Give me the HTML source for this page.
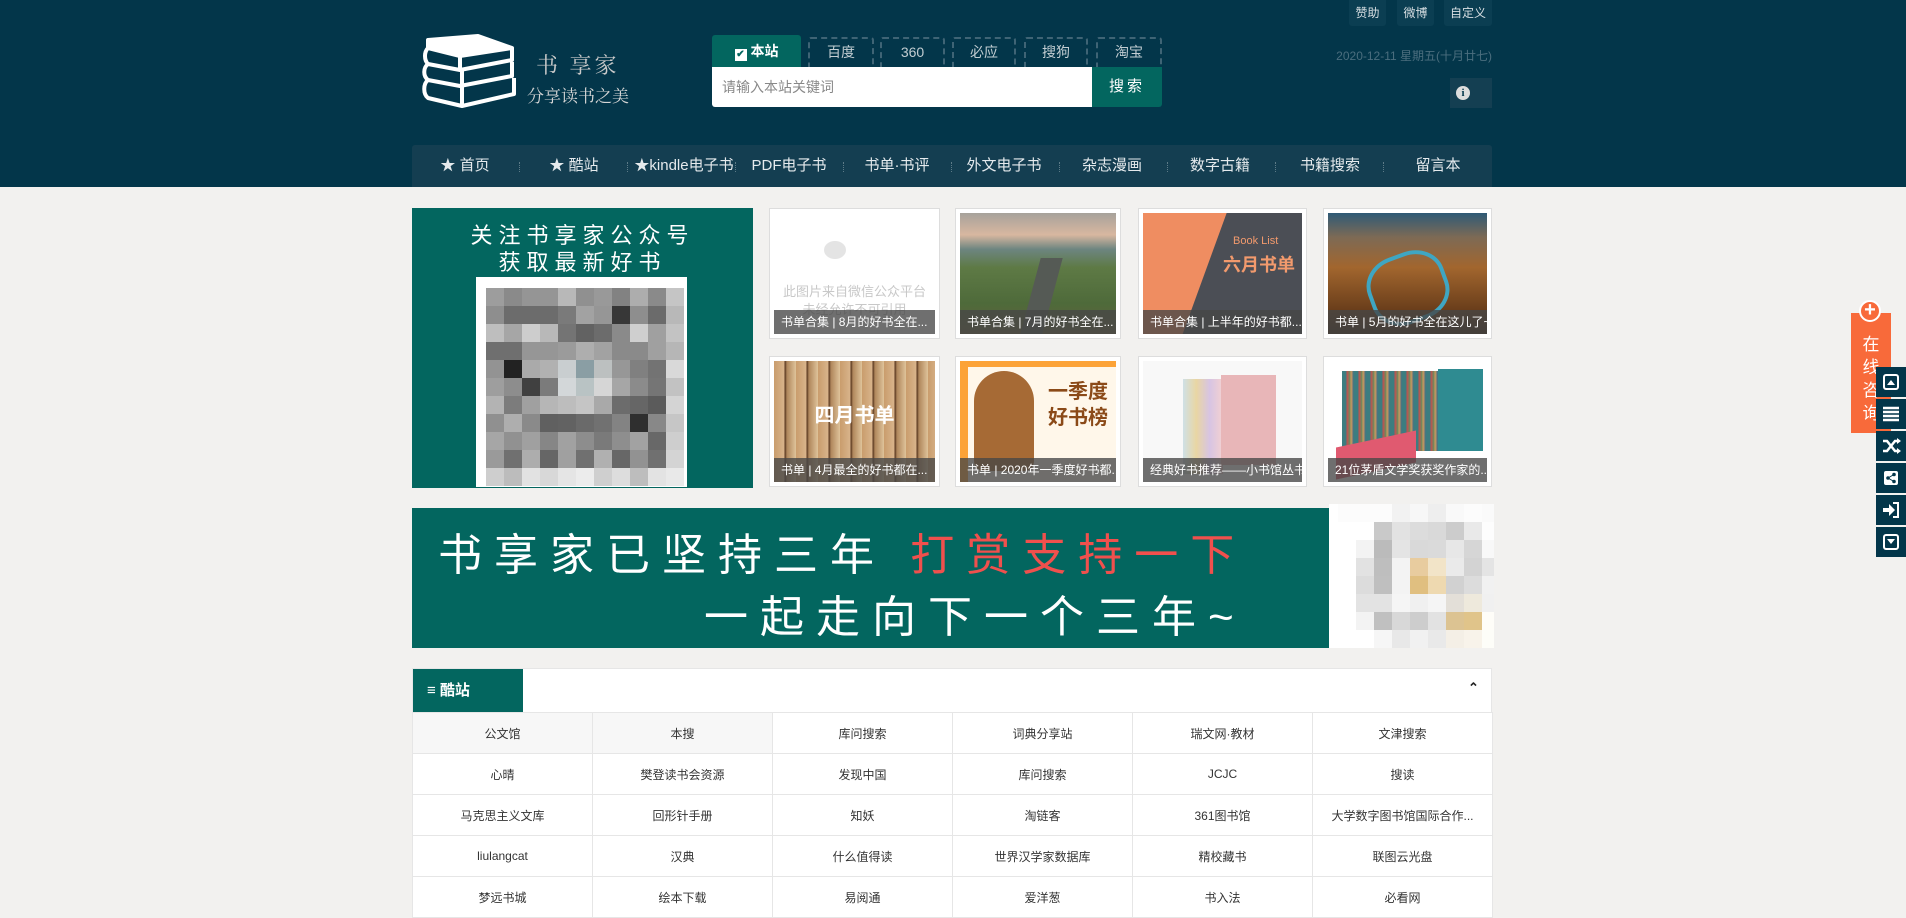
<!DOCTYPE html>
<html><head><meta charset="utf-8"><style>
*{margin:0;padding:0;box-sizing:border-box}
body{width:1906px;height:909px;overflow:hidden;background:#f2f1ef;font-family:"Liberation Sans","Noto Sans CJK SC",sans-serif;position:relative;font-size:12px;color:#333}
.abs{position:absolute}
#hd{left:0;top:0;width:1906px;height:187px;background:#03364a}
.tb{top:0;height:26px;background:#0b3e52;color:#d8dfe3;font-size:12px;line-height:26px;text-align:center;border-radius:0 0 3px 3px}
.tab{top:37px;height:30px;border:2px dashed #3f6475;border-bottom:none;color:#c2cdd2;font-size:14px;text-align:center;line-height:27px;border-radius:3px 3px 0 0}
.nav{top:145px;left:412px;width:1080px;height:42px;background:#143e51;border-radius:3px 3px 0 0}
.nav span{position:absolute;top:0;line-height:42px;color:#e5eaed;font-size:15px;transform:translateX(-50%);white-space:nowrap}
.nav i{position:absolute;top:17px;height:10px;border-left:1px dotted #5d7b88}
.card{background:#fff;border:1px solid #ddd}
.card .im{position:absolute;left:4px;top:4px;right:4px;bottom:4px;overflow:hidden}
.card .cap{position:absolute;left:0;right:0;bottom:0;height:24px;background:rgba(70,70,70,.78);color:#fff;font-size:12px;line-height:24px;padding-left:7px;white-space:nowrap;overflow:hidden}
.qr{display:grid;grid-template-columns:repeat(11,18px);grid-auto-rows:18px}
.mz{display:grid;grid-template-columns:repeat(9,18px);grid-auto-rows:18px}
table{border-collapse:collapse}
td{width:180px;height:41px;border:1px solid #e6e6e6;text-align:center;font-size:12px;color:#333;background:#fff}
.fi{left:1876px;width:30px;height:30px;background:#03364a}
</style></head><body>
<div id="hd" class="abs"></div>
<div class="abs tb" style="left:1349px;width:37px">赞助</div>
<div class="abs tb" style="left:1397px;width:37px">微博</div>
<div class="abs tb" style="left:1444px;width:48px">自定义</div>

<svg class="abs" style="left:420px;top:34px" width="96" height="76" viewBox="0 0 96 76">
<g fill="none" stroke="#fff" stroke-width="4" stroke-linejoin="round">
<path d="M8 6 L58 2 L92 14 L40 22 L8 14 Z"/><path d="M8 14 C4 18 4 26 8 30 L40 36 L92 26 L92 14"/><path d="M40 22 L40 36"/>
<path d="M8 30 C3 34 3 42 8 46 L40 52 L92 42 L92 28"/><path d="M42 36 L42 52"/>
<path d="M8 46 C3 50 3 60 8 64 L42 72 L94 60 L94 44"/><path d="M42 52 L42 72"/>
</g><path d="M8 6 L58 2 L92 14 L40 22 L8 14 Z" fill="#fff"/></svg>
<div class="abs" style="left:536px;top:49px;color:#c9c9c9;font-size:22px;font-family:'Liberation Serif','Noto Serif CJK SC',serif;letter-spacing:3px">书 享家</div>
<div class="abs" style="left:527px;top:82px;color:#d6d6d6;font-size:17px;font-family:'Liberation Serif','Noto Serif CJK SC',serif">分享读书之美</div>

<div class="abs" style="left:712px;top:35px;width:89px;height:32px;background:#03665f;border-radius:3px 3px 0 0;color:#fff;font-weight:bold;font-size:14px;line-height:32px;text-align:center"><span style="display:inline-block;width:12px;height:12px;background:#fff;color:#03665f;font-size:10px;line-height:12px;vertical-align:-1px;margin-right:4px">✔</span>本站</div>
<div class="abs tab" style="left:808px;width:66px">百度</div>
<div class="abs tab" style="left:880px;width:65px">360</div>
<div class="abs tab" style="left:952px;width:64px">必应</div>
<div class="abs tab" style="left:1024px;width:64px">搜狗</div>
<div class="abs tab" style="left:1096px;width:66px">淘宝</div>
<div class="abs" style="left:712px;top:67px;width:380px;height:40px;background:#fff;border-radius:0 0 0 3px;color:#888;font-size:14px;line-height:40px;padding-left:10px">请输入本站关键词</div>
<div class="abs" style="left:1092px;top:67px;width:70px;height:40px;background:#03665f;color:#fff;font-size:15px;line-height:40px;text-align:center;letter-spacing:3px;border-radius:0 0 3px 0">搜索</div>
<div class="abs" style="left:1330px;top:47px;width:162px;text-align:right;color:#4b6e7e;font-size:12px">2020-12-11 星期五(十月廿七)</div>
<div class="abs" style="left:1450px;top:78px;width:42px;height:30px;background:#143f52"><div style="position:absolute;left:6px;top:8px;width:14px;height:14px;border-radius:50%;background:#ddd;color:#03364a;font-weight:bold;font-size:11px;line-height:14px;text-align:center;font-family:'Liberation Serif',serif">i</div></div>

<div class="abs nav">
<span style="left:53px">★ 首页</span><i style="left:107px"></i>
<span style="left:162px">★ 酷站</span><i style="left:215px"></i>
<span style="left:272px">★kindle电子书</span><i style="left:323px"></i>
<span style="left:377px">PDF电子书</span><i style="left:431px"></i>
<span style="left:485px">书单·书评</span><i style="left:539px"></i>
<span style="left:592px">外文电子书</span><i style="left:647px"></i>
<span style="left:700px">杂志漫画</span><i style="left:755px"></i>
<span style="left:808px">数字古籍</span><i style="left:863px"></i>
<span style="left:918px">书籍搜索</span><i style="left:971px"></i>
<span style="left:1026px">留言本</span>
</div>

<div class="abs" style="left:412px;top:208px;width:341px;height:280px;background:#03665f"></div>
<div class="abs" style="left:412px;top:222px;width:341px;text-align:center;color:#fff;font-size:22px;line-height:27px;letter-spacing:6px">关注书享家公众号<br>获取最新好书</div>
<div class="abs" style="left:476px;top:277px;width:211px;height:210px;background:#fff"></div>
<div class="abs qr" style="left:486px;top:288px">
<b style="background:#9d9d9d"></b><b style="background:#8a8a8a"></b><b style="background:#959595"></b><b style="background:#959595"></b><b style="background:#b8b8b8"></b><b style="background:#909090"></b><b style="background:#999"></b><b style="background:#828282"></b><b style="background:#adadad"></b><b style="background:#8a8a8a"></b><b style="background:#c5c5c5"></b>
<b style="background:#8e8e8e"></b><b style="background:#6c6c6c"></b><b style="background:#6c6c6c"></b><b style="background:#6c6c6c"></b><b style="background:#7a7a7a"></b><b style="background:#a2a2a2"></b><b style="background:#969696"></b><b style="background:#373737"></b><b style="background:#8e8e8e"></b><b style="background:#6b6b6b"></b><b style="background:#b8b8b8"></b>
<b style="background:#bebebe"></b><b style="background:#a6a6a6"></b><b style="background:#cdcdcd"></b><b style="background:#b8b8b8"></b><b style="background:#747474"></b><b style="background:#626262"></b><b style="background:#6c6c6c"></b><b style="background:#8a8a8a"></b><b style="background:#cfcfcf"></b><b style="background:#a0a0a0"></b><b style="background:#c3c3c3"></b>
<b style="background:#6f6f6f"></b><b style="background:#6f6f6f"></b><b style="background:#969696"></b><b style="background:#969696"></b><b style="background:#9b9b9b"></b><b style="background:#aeaeae"></b><b style="background:#a2a2a2"></b><b style="background:#8a8a8a"></b><b style="background:#8a8a8a"></b><b style="background:#a0a0a0"></b><b style="background:#b6b6b6"></b>
<b style="background:#939393"></b><b style="background:#222"></b><b style="background:#aaa"></b><b style="background:#b1b1b1"></b><b style="background:#c9ced0"></b><b style="background:#8a9ea4"></b><b style="background:#bcc0c0"></b><b style="background:#979797"></b><b style="background:#808080"></b><b style="background:#737373"></b><b style="background:#d9d9d9"></b>
<b style="background:#9e9e9e"></b><b style="background:#8d8d8d"></b><b style="background:#404040"></b><b style="background:#7b7b7b"></b><b style="background:#d3d7d9"></b><b style="background:#b9c3c4"></b><b style="background:#d6d6d6"></b><b style="background:#a6a6a6"></b><b style="background:#8b8b8b"></b><b style="background:#757575"></b><b style="background:#c2c2c2"></b>
<b style="background:#b3b3b3"></b><b style="background:#7c7c7c"></b><b style="background:#a0a0a0"></b><b style="background:#b6b6b6"></b><b style="background:#bdbdbd"></b><b style="background:#c5c5c5"></b><b style="background:#a9a9a9"></b><b style="background:#6c6c6c"></b><b style="background:#666"></b><b style="background:#5b5b5b"></b><b style="background:#d4d4d4"></b>
<b style="background:#909090"></b><b style="background:#aeaeae"></b><b style="background:#8a8a8a"></b><b style="background:#606060"></b><b style="background:#626262"></b><b style="background:#6a6a6a"></b><b style="background:#717171"></b><b style="background:#838383"></b><b style="background:#2f2f2f"></b><b style="background:#888"></b><b style="background:#c6c6c6"></b>
<b style="background:#a6a6a6"></b><b style="background:#919191"></b><b style="background:#a0a0a0"></b><b style="background:#868686"></b><b style="background:#a1a1a1"></b><b style="background:#8d8d8d"></b><b style="background:#7a7a7a"></b><b style="background:#8e8e8e"></b><b style="background:#a2a2a2"></b><b style="background:#686868"></b><b style="background:#cecece"></b>
<b style="background:#9a9a9a"></b><b style="background:#707070"></b><b style="background:#adadad"></b><b style="background:#666"></b><b style="background:#a0a0a0"></b><b style="background:#707070"></b><b style="background:#b0b0b0"></b><b style="background:#676767"></b><b style="background:#929292"></b><b style="background:#707070"></b><b style="background:#d4d4d4"></b>
<b style="background:#cecece"></b><b style="background:#bcbcbc"></b><b style="background:#e2e2e2"></b><b style="background:#d8d8d8"></b><b style="background:#e5e5e5"></b><b style="background:#ececec"></b><b style="background:#cfcfcf"></b><b style="background:#ddd"></b><b style="background:#bdbdbd"></b><b style="background:#e3e3e3"></b><b style="background:#e9e9e9"></b>
</div>

<!-- cards row1 -->
<div class="abs card" style="left:769px;top:208px;width:171px;height:131px"><div class="im" style="background:#fff"><div style="position:absolute;left:50px;top:28px;width:22px;height:18px;border-radius:50%;background:#e4e4e4"></div><div style="position:absolute;left:0;right:0;top:70px;text-align:center;color:#c8c8c8;font-size:13px;line-height:18px">此图片来自微信公众平台<br>未经允许不可引用</div><div class="cap">书单合集 | 8月的好书全在...</div></div></div>
<div class="abs card" style="left:955px;top:208px;width:166px;height:131px"><div class="im" style="background:linear-gradient(#a7a29b 0%,#d8b7a0 18%,#6d8580 30%,#5e7a45 45%,#4e6a3a 75%,#65613e 100%)"><div style="position:absolute;left:70px;top:45px;width:22px;height:80px;background:#555a55;transform:skewX(-15deg)"></div><div class="cap">书单合集 | 7月的好书全在...</div></div></div>
<div class="abs card" style="left:1138px;top:208px;width:169px;height:131px"><div class="im" style="background:#ef8d61"><div style="position:absolute;left:60px;top:-10px;width:120px;height:150px;background:#4b4e55;transform:skewX(-20deg)"></div><div style="position:absolute;left:90px;top:22px;color:#f29a6d;font-size:11px">Book List</div><div style="position:absolute;left:80px;top:38px;color:#f29a6d;font-size:18px;font-weight:bold">六月书单</div><div class="cap">书单合集 | 上半年的好书都...</div></div></div>
<div class="abs card" style="left:1323px;top:208px;width:169px;height:131px"><div class="im" style="background:linear-gradient(#2f5a76 0%,#7d6a55 20%,#a2662e 45%,#6a3e1b 80%,#3a2410 100%)"><div style="position:absolute;left:40px;top:40px;width:80px;height:70px;border:4px solid #3fa6c2;border-radius:40%;transform:rotate(-20deg)"></div><div class="cap">书单 | 5月的好书全在这儿了~</div></div></div>
<!-- row2 -->
<div class="abs card" style="left:769px;top:356px;width:171px;height:131px"><div class="im" style="background:repeating-linear-gradient(90deg,#c99d6d 0,#d8b38a 10px,#5b3a22 11px,#b0875c 13px,#dfc39a 22px)"><div style="position:absolute;left:0;right:0;top:38px;text-align:center;color:#fff;font-size:20px;font-weight:bold">四月书单</div><div class="cap">书单 | 4月最全的好书都在...</div></div></div>
<div class="abs card" style="left:955px;top:356px;width:166px;height:131px"><div class="im" style="background:#fca338"><div style="position:absolute;left:8px;top:6px;right:0;bottom:0;background:#fff7ea"></div><div style="position:absolute;left:14px;top:10px;width:60px;height:100px;background:#a66a35;border-radius:30px 30px 10px 10px"></div><div style="position:absolute;left:88px;top:18px;color:#8b4a18;font-size:20px;font-weight:bold;line-height:26px">一季度<br>好书榜</div><div class="cap">书单 | 2020年一季度好书都...</div></div></div>
<div class="abs card" style="left:1138px;top:356px;width:169px;height:131px"><div class="im" style="background:#f8f8f8"><div style="position:absolute;left:40px;top:18px;width:40px;height:95px;background:linear-gradient(90deg,#cfe0e6,#e9d6a3,#d7c4e3,#f3d1d1)"></div><div style="position:absolute;left:78px;top:14px;width:55px;height:90px;background:#e8b6b8"></div><div class="cap">经典好书推荐——小书馆丛书</div></div></div>
<div class="abs card" style="left:1323px;top:356px;width:169px;height:131px"><div class="im" style="background:#fff"><div style="position:absolute;left:14px;top:10px;width:140px;height:80px;background:repeating-linear-gradient(90deg,#3c7d80 0,#3c7d80 4px,#c05050 5px,#6a8e5d 8px,#d89a5a 9px,#2f6d89 12px)"></div><div style="position:absolute;left:110px;top:8px;width:45px;height:82px;background:#2f8b91"></div><div style="position:absolute;left:8px;top:78px;width:80px;height:32px;background:#e05a70;transform:skewY(-12deg)"></div><div class="cap">21位茅盾文学奖获奖作家的...</div></div></div>

<!-- banner -->
<div class="abs" style="left:412px;top:508px;width:917px;height:140px;background:#03665f"></div>
<div class="abs" style="left:438px;top:532px;color:#fff;font-size:44px;line-height:48px;letter-spacing:12px;white-space:nowrap">书享家已坚持三年 <span style="color:#f0504d">打赏支持一下</span></div>
<div class="abs" style="left:704px;top:594px;color:#fff;font-size:44px;line-height:48px;letter-spacing:12px;white-space:nowrap">一起走向下一个三年~</div>
<div class="abs" style="left:1329px;top:504px;width:165px;height:144px;background:#fff;overflow:hidden"><div class="mz" style="position:absolute;left:9px;top:0">
<b style="background:#fcfcfc"></b><b style="background:#fcfcfc"></b><b style="background:#fcfcfc"></b><b style="background:#f2f2f2"></b><b style="background:#f7f7f7"></b><b style="background:#eee"></b><b style="background:#f9f9f9"></b><b style="background:#fcfcfc"></b><b style="background:#fafafa"></b>
<b style="background:#fff"></b><b style="background:#fff"></b><b style="background:#c9c9c9"></b><b style="background:#e2e2e2"></b><b style="background:#dcdcdc"></b><b style="background:#d9d9d9"></b><b style="background:#ccc"></b><b style="background:#e9e9e9"></b><b style="background:#fdfdfd"></b>
<b style="background:#fff"></b><b style="background:#f3f3f3"></b><b style="background:#bbb"></b><b style="background:#e4e4e4"></b><b style="background:#d9d9d9"></b><b style="background:#dadada"></b><b style="background:#e7e7e7"></b><b style="background:#d6d6d6"></b><b style="background:#f8f8f8"></b>
<b style="background:#fff"></b><b style="background:#e2e2e2"></b><b style="background:#bebebe"></b><b style="background:#f3f3f3"></b><b style="background:#e8cc9f"></b><b style="background:#f2e4c8"></b><b style="background:#eaeaea"></b><b style="background:#d3d3d3"></b><b style="background:#e4e4e4"></b>
<b style="background:#fff"></b><b style="background:#dcdcdc"></b><b style="background:#bfbfbf"></b><b style="background:#f3f3f3"></b><b style="background:#e0bf80"></b><b style="background:#eed9b0"></b><b style="background:#d1d1d1"></b><b style="background:#dcdcdc"></b><b style="background:#f1f1f1"></b>
<b style="background:#fff"></b><b style="background:#e3e3e3"></b><b style="background:#e3e3e3"></b><b style="background:#f5f5f5"></b><b style="background:#f0f0f0"></b><b style="background:#f5f5f5"></b><b style="background:#e3dfd8"></b><b style="background:#eee9dc"></b><b style="background:#f0f0f0"></b>
<b style="background:#fff"></b><b style="background:#f3f3f3"></b><b style="background:#c0c0c0"></b><b style="background:#d8d8d8"></b><b style="background:#cdcdcd"></b><b style="background:#e2e2e2"></b><b style="background:#dcc392"></b><b style="background:#e0c48a"></b><b style="background:#fefdf8"></b>
<b style="background:#fff"></b><b style="background:#fff"></b><b style="background:#f6f6f6"></b><b style="background:#e8e8e8"></b><b style="background:#f1f1f1"></b><b style="background:#e9e9e9"></b><b style="background:#f4efe6"></b><b style="background:#f8f3ea"></b><b style="background:#fdfdf8"></b>
</div></div>

<!-- cool sites -->
<div class="abs" style="left:412px;top:668px;width:1080px;height:45px;background:#fff;border:1px solid #e6e6e6"></div>
<div class="abs" style="left:413px;top:669px;width:110px;height:43px;background:#03665f;color:#fff;font-weight:bold;font-size:15px;line-height:43px;padding-left:14px">≡ 酷站</div>
<div class="abs" style="left:1468px;top:680px;font-size:13px;font-weight:bold;color:#222">⌃</div>
<table class="abs" style="left:412px;top:712px">
<tr><td style="background:#f7f7f7">公文馆</td><td style="background:#f7f7f7">本搜</td><td>库问搜索</td><td>词典分享站</td><td>瑞文网·教材</td><td>文津搜索</td></tr>
<tr><td>心晴</td><td>樊登读书会资源</td><td>发现中国</td><td>库问搜索</td><td>JCJC</td><td>搜读</td></tr>
<tr><td>马克思主义文库</td><td>回形针手册</td><td>知妖</td><td>淘链客</td><td>361图书馆</td><td>大学数字图书馆国际合作...</td></tr>
<tr><td>liulangcat</td><td>汉典</td><td>什么值得读</td><td>世界汉学家数据库</td><td>精校藏书</td><td>联图云光盘</td></tr>
<tr><td>梦远书城</td><td>绘本下载</td><td>易阅通</td><td>爱洋葱</td><td>书入法</td><td>必看网</td></tr>
</table>

<!-- right float -->
<div class="abs" style="left:1851px;top:313px;width:40px;height:120px;background:#f86a3a;color:#fff;font-size:17px;line-height:23px;text-align:center;padding-top:20px">在<br>线<br>咨<br>询</div>
<div class="abs" style="left:1859px;top:300px;width:22px;height:22px;border-radius:50%;background:#f86a3a;border:2px solid #fff;color:#fff;font-size:20px;line-height:17px;text-align:center;font-weight:bold">+</div>
<div class="abs fi" style="top:367px"><svg width="30" height="30"><rect x="8" y="8" width="14" height="14" rx="2" fill="none" stroke="#fff" stroke-width="2"/><path d="M11 18h8l-4-5z" fill="#fff"/></svg></div>
<div class="abs fi" style="top:399px"><svg width="30" height="30"><path d="M7 9h16M7 13h16M7 17h16M7 21h16" stroke="#fff" stroke-width="2.5"/></svg></div>
<div class="abs fi" style="top:431px"><svg width="30" height="30"><path d="M7 10h4l8 10h4M7 20h4l8-10h4" stroke="#fff" stroke-width="2.5" fill="none"/><path d="M21 7l4 3-4 3zM21 17l4 3-4 3z" fill="#fff"/></svg></div>
<div class="abs fi" style="top:463px"><svg width="30" height="30"><rect x="8" y="8" width="14" height="14" rx="2" fill="#fff"/><circle cx="18" cy="11.5" r="1.8" fill="#03364a"/><circle cx="12" cy="15" r="1.8" fill="#03364a"/><circle cx="18" cy="18.5" r="1.8" fill="#03364a"/><path d="M18 11.5L12 15L18 18.5" stroke="#03364a" fill="none"/></svg></div>
<div class="abs fi" style="top:495px"><svg width="30" height="30"><path d="M7 13h6v-4l6 6-6 6v-4H7z" fill="#fff"/><path d="M17 8h5v14h-5" stroke="#fff" stroke-width="2" fill="none"/></svg></div>
<div class="abs fi" style="top:527px"><svg width="30" height="30"><rect x="8" y="8" width="14" height="14" rx="2" fill="none" stroke="#fff" stroke-width="2"/><path d="M11 12h8l-4 5z" fill="#fff"/></svg></div>
</body></html>
